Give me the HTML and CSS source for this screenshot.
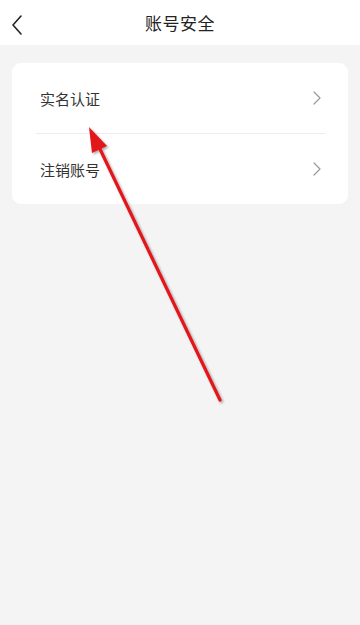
FILE: index.html
```html
<!DOCTYPE html>
<html lang="zh">
<head>
<meta charset="utf-8">
<link rel="stylesheet" href="styles.css">
</head>
<body>
<div class="page">
  <header class="topbar">
    <svg class="back" viewBox="0 0 14 22" width="14" height="22"><path d="M11 2 L3 11 L11 20" fill="none" stroke="#222" stroke-width="1.6" stroke-linecap="round" stroke-linejoin="round"/></svg>
    <div class="title">账号安全</div>
  </header>
  <main class="content">
    <div class="card">
      <div class="row">
        <span class="label">实名认证</span>
        <svg class="chev" viewBox="0 0 8 14" width="8" height="14"><path d="M1 1 L7 7 L1 13" fill="none" stroke="#999" stroke-width="1.2" stroke-linecap="round" stroke-linejoin="round"/></svg>
      </div>
      <div class="divider"></div>
      <div class="row">
        <span class="label">注销账号</span>
        <svg class="chev" viewBox="0 0 8 14" width="8" height="14"><path d="M1 1 L7 7 L1 13" fill="none" stroke="#999" stroke-width="1.2" stroke-linecap="round" stroke-linejoin="round"/></svg>
      </div>
    </div>
  </main>
  <svg class="annot" viewBox="0 0 360 625" width="360" height="625">
    <defs>
      <filter id="sh" x="-20%" y="-20%" width="140%" height="140%">
        <feDropShadow dx="1.5" dy="1.5" stdDeviation="1.2" flood-color="#000" flood-opacity="0.35"/>
      </filter>
    </defs>
    <g filter="url(#sh)">
      <line x1="220" y1="400" x2="99" y2="147" stroke="#e3161b" stroke-width="3.2" stroke-linecap="round"/>
      <polygon points="89,127 107,146 92,153" fill="#e3161b"/>
    </g>
  </svg>
</div>
</body>
</html>
```
FILE: styles.css
```css
* { box-sizing: border-box; }
html, body { margin: 0; padding: 0; }
body {
  font-family: "Noto Sans CJK SC", "Noto Sans", sans-serif;
  background: #f4f4f4;
}
.page {
  position: relative;
  width: 360px;
  height: 625px;
  overflow: hidden;
  background: #f4f4f4;
}
.topbar {
  position: relative;
  height: 45px;
  background: #fff;
  display: flex;
  align-items: center;
  justify-content: center;
}
.back {
  position: absolute;
  left: 10px;
  top: 14px;
}
.title {
  font-size: 17px;
  color: #222;
  letter-spacing: 0.5px;
}
.content {
  padding: 18px 12px 0 12px;
}
.card {
  background: #fff;
  border-radius: 9px;
  padding: 0 23px 0 24px;
}
.row {
  height: 70px;
  display: flex;
  align-items: center;
  justify-content: space-between;
  padding-left: 4px;
}
.label {
  font-size: 15px;
  color: #333;
}
.chev { margin-right: 4px; }
.divider {
  height: 1px;
  background: #ececec;
}
.annot {
  position: absolute;
  left: 0;
  top: 0;
  pointer-events: none;
}
```
